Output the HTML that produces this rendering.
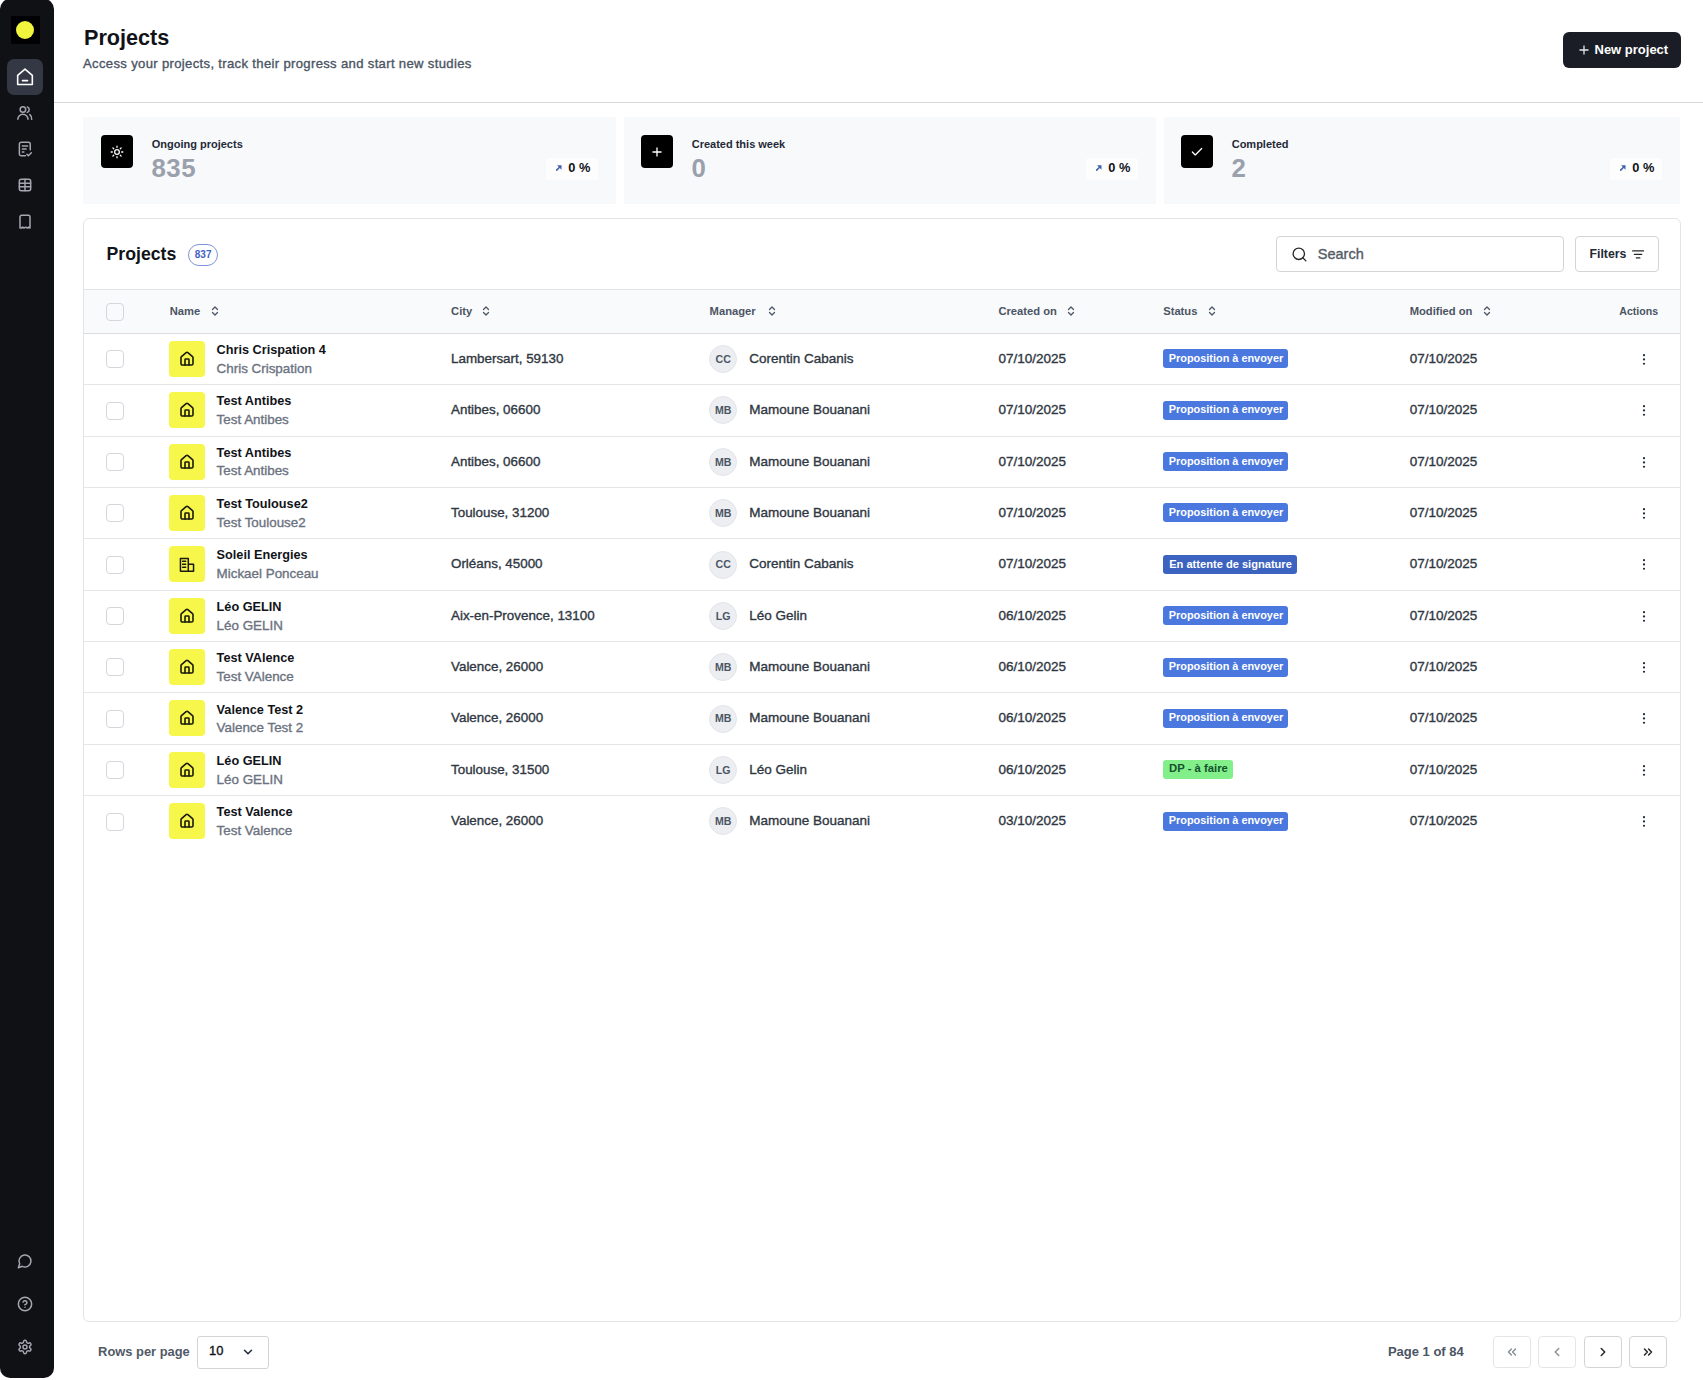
<!DOCTYPE html>
<html><head><meta charset="utf-8"><title>Projects</title><style>
*{margin:0;padding:0;box-sizing:border-box}
html,body{width:1703px;height:1380px;overflow:hidden;background:#fff;font-family:"Liberation Sans",sans-serif}
.t{position:absolute;white-space:nowrap}
.a{position:absolute}
svg{position:absolute;overflow:visible}
</style></head>
<body>
<div class="a" style="left:0;top:-1.5px;width:54px;height:1379.5px;background:#0f1115;border-radius:10px"></div>
<div class="a" style="left:11px;top:16px;width:29px;height:28px;background:#020205"></div>
<div class="a" style="left:16px;top:21px;width:18px;height:18px;border-radius:50%;background:#f1f53e"></div>
<div class="a" style="left:7px;top:59px;width:36px;height:36px;border-radius:7px;background:#343744"></div>
<svg style="left:15.0px;top:66.6px" width="20" height="20" viewBox="0 0 24 24" fill="none" stroke="#ffffff" stroke-width="1.92" stroke-linecap="round" stroke-linejoin="round"><path d="M3.2 10 12 2.6l8.8 7.4V21H3.2Z"/><path d="M9 16.4h6"/></svg>
<svg style="left:15.850000000000001px;top:103.65px" width="17.5" height="17.5" viewBox="0 0 24 24" fill="none" stroke="#a4a7b0" stroke-width="2.06" stroke-linecap="round" stroke-linejoin="round"><circle cx="9.5" cy="7.5" r="3.8"/><path d="M2.5 21a7 7 0 0 1 14 0"/><path d="M15.5 4a4 4 0 0 1 0 7.5"/><path d="M19 14.5a7 7 0 0 1 2.5 6.5"/></svg>
<svg style="left:16.0px;top:140.0px" width="18" height="18" viewBox="0 0 24 24" fill="none" stroke="#a4a7b0" stroke-width="2.00" stroke-linecap="round" stroke-linejoin="round"><path d="M12.5 21H7a2.5 2.5 0 0 1-2.5-2.5v-13A2.5 2.5 0 0 1 7 3h9.5A2.5 2.5 0 0 1 19 5.5V13"/><path d="M8.5 8h7M8.5 12h5M8.5 16h2"/><path d="m14.5 19 2 2 4-4"/></svg>
<svg style="left:17.0px;top:177.0px" width="16" height="16" viewBox="0 0 24 24" fill="none" stroke="#a4a7b0" stroke-width="2.25" stroke-linecap="round" stroke-linejoin="round"><rect x="3.5" y="3.5" width="17" height="17" rx="3"/><path d="M3.5 9.2h17M3.5 14.8h17M12 3.5v17"/></svg>
<svg style="left:17.0px;top:213.5px" width="16" height="16" viewBox="0 0 24 24" fill="none" stroke="#a4a7b0" stroke-width="2.25" stroke-linecap="round" stroke-linejoin="round"><path d="M4.5 4.5A2.5 2.5 0 0 1 7 2h10a2.5 2.5 0 0 1 2.5 2.5V21l-2-1.3-2 1.3-2.5-1.3-2.5 1.3-2-1.3-2 1.3L4.5 21Z"/></svg>
<svg style="left:17.0px;top:1253.0px" width="16" height="16" viewBox="0 0 24 24" fill="none" stroke="#a4a7b0" stroke-width="2.25" stroke-linecap="round" stroke-linejoin="round"><path d="M7.9 20A9 9 0 1 0 4 16.1L2 22Z"/></svg>
<svg style="left:17.0px;top:1296.0px" width="16" height="16" viewBox="0 0 24 24" fill="none" stroke="#a4a7b0" stroke-width="2.25" stroke-linecap="round" stroke-linejoin="round"><circle cx="12" cy="12" r="10"/><path d="M9.1 9a3 3 0 0 1 5.8 1c0 2-3 3-3 3"/><path d="M12 17h.01"/></svg>
<svg style="left:17.0px;top:1339.0px" width="16" height="16" viewBox="0 0 24 24" fill="none" stroke="#a4a7b0" stroke-width="2.25" stroke-linecap="round" stroke-linejoin="round"><path d="M12.22 2h-.44a2 2 0 0 0-2 2v.18a2 2 0 0 1-1 1.73l-.43.25a2 2 0 0 1-2 0l-.15-.08a2 2 0 0 0-2.73.73l-.22.38a2 2 0 0 0 .73 2.73l.15.1a2 2 0 0 1 1 1.72v.51a2 2 0 0 1-1 1.74l-.15.09a2 2 0 0 0-.73 2.73l.22.38a2 2 0 0 0 2.73.73l.15-.08a2 2 0 0 1 2 0l.43.25a2 2 0 0 1 1 1.73V20a2 2 0 0 0 2 2h.44a2 2 0 0 0 2-2v-.18a2 2 0 0 1 1-1.73l.43-.25a2 2 0 0 1 2 0l.15.08a2 2 0 0 0 2.73-.73l.22-.39a2 2 0 0 0-.73-2.73l-.15-.08a2 2 0 0 1-1-1.74v-.5a2 2 0 0 1 1-1.74l.15-.09a2 2 0 0 0 .73-2.73l-.22-.38a2 2 0 0 0-2.73-.73l-.15.08a2 2 0 0 1-2 0l-.43-.25a2 2 0 0 1-1-1.73V4a2 2 0 0 0-2-2z"/><circle cx="12" cy="12" r="3"/></svg>
<div class="t" style="left:84px;top:26.62px;font-size:21.6px;line-height:21.6px;font-weight:700;color:#111318;">Projects</div>
<div class="t" style="left:83px;top:56.71px;font-size:13.1px;line-height:13.1px;font-weight:400;color:#4b5563;letter-spacing:0.33px;-webkit-text-stroke:0.35px currentColor;">Access your projects, track their progress and start new studies</div>
<div class="a" style="left:54px;top:102px;width:1649px;height:1px;background:#d6d6da"></div>
<div class="a" style="left:1563px;top:32px;width:118px;height:36px;border-radius:6px;background:#1a1d26"></div>
<svg style="left:1578.5px;top:45px" width="10" height="10" viewBox="0 0 10 10" stroke="#e5e7eb" stroke-width="1.3" fill="none"><path d="M5 0.5v9M0.5 5h9"/></svg>
<div class="t" style="left:1594.5px;top:42.60px;font-size:13px;line-height:13px;font-weight:700;color:#ffffff;">New project</div>
<div class="a" style="left:83px;top:116.5px;width:533px;height:87px;background:#f8f9fb;border-radius:1px"></div>
<div class="a" style="left:101px;top:135px;width:32px;height:33px;border-radius:4px;background:#000"></div>
<svg style="left:110.0px;top:144.5px" width="14" height="14" viewBox="0 0 24 24" fill="none" stroke="#ffffff" stroke-width="2.23" stroke-linecap="round" stroke-linejoin="round"><circle cx="12" cy="12" r="4"/><path d="M12 2v2M12 20v2M4.93 4.93l1.41 1.41M17.66 17.66l1.41 1.41M2 12h2M20 12h2M6.34 17.66l-1.41 1.41M19.07 4.93l-1.41 1.41"/></svg>
<div class="t" style="left:151.7px;top:138.59px;font-size:11px;line-height:11px;font-weight:700;color:#1f2937;">Ongoing projects</div>
<div class="t" style="left:151.5px;top:155.56px;font-size:25.8px;line-height:25.8px;font-weight:700;color:#9aa1ad;letter-spacing:0.5px;">835</div>
<div class="a" style="left:546px;top:157.5px;width:52px;height:22px;border-radius:3px;background:#fdfdfe"></div>
<svg style="left:555.7px;top:165.2px" width="5.8" height="5.8" viewBox="0 0 6 6"><path d="M0.7 5.3 3.4 2.6" stroke="#3f5fae" stroke-width="1.6" stroke-linecap="round"/><path d="M1.1 0.3H5.7V4.9Z" fill="#3f5fae"/></svg>
<div class="t" style="right:1112.6px;top:161.76px;font-size:12.8px;line-height:12.8px;font-weight:700;color:#111318;">0 %</div>
<div class="a" style="left:624px;top:116.5px;width:532px;height:87px;background:#f8f9fb;border-radius:1px"></div>
<div class="a" style="left:641px;top:135px;width:32px;height:33px;border-radius:4px;background:#000"></div>
<svg style="left:650.0px;top:144.5px" width="14" height="14" viewBox="0 0 24 24" fill="none" stroke="#ffffff" stroke-width="2.23" stroke-linecap="round" stroke-linejoin="round"><path d="M5 12h14M12 5v14"/></svg>
<div class="t" style="left:691.7px;top:138.59px;font-size:11px;line-height:11px;font-weight:700;color:#1f2937;">Created this week</div>
<div class="t" style="left:691.5px;top:155.56px;font-size:25.8px;line-height:25.8px;font-weight:700;color:#9aa1ad;letter-spacing:0.5px;">0</div>
<div class="a" style="left:1086px;top:157.5px;width:52px;height:22px;border-radius:3px;background:#fdfdfe"></div>
<svg style="left:1095.7px;top:165.2px" width="5.8" height="5.8" viewBox="0 0 6 6"><path d="M0.7 5.3 3.4 2.6" stroke="#3f5fae" stroke-width="1.6" stroke-linecap="round"/><path d="M1.1 0.3H5.7V4.9Z" fill="#3f5fae"/></svg>
<div class="t" style="right:572.5999999999999px;top:161.76px;font-size:12.8px;line-height:12.8px;font-weight:700;color:#111318;">0 %</div>
<div class="a" style="left:1164px;top:116.5px;width:516px;height:87px;background:#f8f9fb;border-radius:1px"></div>
<div class="a" style="left:1181px;top:135px;width:32px;height:33px;border-radius:4px;background:#000"></div>
<svg style="left:1190.0px;top:144.5px" width="14" height="14" viewBox="0 0 24 24" fill="none" stroke="#ffffff" stroke-width="2.23" stroke-linecap="round" stroke-linejoin="round"><path d="M20 6 9 17l-5-5"/></svg>
<div class="t" style="left:1231.7px;top:138.59px;font-size:11px;line-height:11px;font-weight:700;color:#1f2937;">Completed</div>
<div class="t" style="left:1231.5px;top:155.56px;font-size:25.8px;line-height:25.8px;font-weight:700;color:#9aa1ad;letter-spacing:0.5px;">2</div>
<div class="a" style="left:1610px;top:157.5px;width:52px;height:22px;border-radius:3px;background:#fdfdfe"></div>
<svg style="left:1619.7px;top:165.2px" width="5.8" height="5.8" viewBox="0 0 6 6"><path d="M0.7 5.3 3.4 2.6" stroke="#3f5fae" stroke-width="1.6" stroke-linecap="round"/><path d="M1.1 0.3H5.7V4.9Z" fill="#3f5fae"/></svg>
<div class="t" style="right:48.59999999999991px;top:161.76px;font-size:12.8px;line-height:12.8px;font-weight:700;color:#111318;">0 %</div>
<div class="a" style="left:83px;top:218px;width:1598px;height:1104px;border:1px solid #e4e4e7;border-radius:6px;background:#fff"></div>
<div class="t" style="left:106.5px;top:245.82px;font-size:17.7px;line-height:17.7px;font-weight:700;color:#111318;">Projects</div>
<div class="a" style="left:188px;top:244px;width:30px;height:21.5px;border:1px solid #7f95d6;border-radius:11px"></div>
<div class="t" style="left:194.8px;top:250.14px;font-size:10px;line-height:10px;font-weight:700;color:#3f63c2;">837</div>
<div class="a" style="left:1276px;top:236px;width:288px;height:35.5px;border:1px solid #d4d4d8;border-radius:4px"></div>
<svg style="left:1291.1px;top:245.9px" width="17" height="17" viewBox="0 0 24 24" fill="none" stroke="#27272a" stroke-width="1.91" stroke-linecap="round" stroke-linejoin="round"><circle cx="11" cy="11" r="8"/><path d="m21 21-4.3-4.3"/></svg>
<div class="t" style="left:1317.8px;top:247.03px;font-size:14.5px;line-height:14.5px;font-weight:400;color:#555b66;-webkit-text-stroke:0.35px currentColor;">Search</div>
<div class="a" style="left:1575px;top:236px;width:84px;height:35.5px;border:1px solid #d4d4d8;border-radius:4px"></div>
<div class="t" style="left:1589.5px;top:247.59px;font-size:12.3px;line-height:12.3px;font-weight:700;color:#1f2937;">Filters</div>
<svg style="left:1632px;top:250px" width="12" height="9" viewBox="0 0 12 9" stroke="#27272a" stroke-width="1.15" fill="none" stroke-linecap="round"><path d="M0.6 0.9h11M2.4 4.4h7.4M4.3 7.9h3.6"/></svg>
<div class="a" style="left:84px;top:289px;width:1596px;height:45px;background:#f9fafb;border-top:1px solid #e4e4e7;border-bottom:1px solid #dcdce0"></div>
<div class="a" style="left:106px;top:303px;width:18px;height:18px;border:1px solid #d3d6db;border-radius:4px;background:transparent"></div>
<div class="t" style="left:169.7px;top:305.82px;font-size:11.2px;line-height:11.2px;font-weight:700;color:#4b5563;">Name</div>
<svg style="left:209.0px;top:305.2px" width="12" height="12" viewBox="0 0 24 24" fill="none" stroke="#4b5563" stroke-width="2.60" stroke-linecap="round" stroke-linejoin="round"><path d="m7 15 5 5 5-5"/><path d="m7 9 5-5 5 5"/></svg>
<div class="t" style="left:451.1px;top:305.82px;font-size:11.2px;line-height:11.2px;font-weight:700;color:#4b5563;">City</div>
<svg style="left:480.3px;top:305.2px" width="12" height="12" viewBox="0 0 24 24" fill="none" stroke="#4b5563" stroke-width="2.60" stroke-linecap="round" stroke-linejoin="round"><path d="m7 15 5 5 5-5"/><path d="m7 9 5-5 5 5"/></svg>
<div class="t" style="left:709.6px;top:305.82px;font-size:11.2px;line-height:11.2px;font-weight:700;color:#4b5563;">Manager</div>
<svg style="left:765.7px;top:305.2px" width="12" height="12" viewBox="0 0 24 24" fill="none" stroke="#4b5563" stroke-width="2.60" stroke-linecap="round" stroke-linejoin="round"><path d="m7 15 5 5 5-5"/><path d="m7 9 5-5 5 5"/></svg>
<div class="t" style="left:998.4px;top:305.82px;font-size:11.2px;line-height:11.2px;font-weight:700;color:#4b5563;">Created on</div>
<svg style="left:1065.0px;top:305.2px" width="12" height="12" viewBox="0 0 24 24" fill="none" stroke="#4b5563" stroke-width="2.60" stroke-linecap="round" stroke-linejoin="round"><path d="m7 15 5 5 5-5"/><path d="m7 9 5-5 5 5"/></svg>
<div class="t" style="left:1163.2px;top:305.82px;font-size:11.2px;line-height:11.2px;font-weight:700;color:#4b5563;">Status</div>
<svg style="left:1205.5px;top:305.2px" width="12" height="12" viewBox="0 0 24 24" fill="none" stroke="#4b5563" stroke-width="2.60" stroke-linecap="round" stroke-linejoin="round"><path d="m7 15 5 5 5-5"/><path d="m7 9 5-5 5 5"/></svg>
<div class="t" style="left:1409.7px;top:305.82px;font-size:11.2px;line-height:11.2px;font-weight:700;color:#4b5563;">Modified on</div>
<svg style="left:1480.8px;top:305.2px" width="12" height="12" viewBox="0 0 24 24" fill="none" stroke="#4b5563" stroke-width="2.60" stroke-linecap="round" stroke-linejoin="round"><path d="m7 15 5 5 5-5"/><path d="m7 9 5-5 5 5"/></svg>
<div class="t" style="right:44.90000000000009px;top:306.33px;font-size:10.6px;line-height:10.6px;font-weight:700;color:#4b5563;">Actions</div>
<div class="a" style="left:84px;top:384px;width:1596px;height:1px;background:#e6e6e9"></div>
<div class="a" style="left:106px;top:350px;width:18px;height:18px;border:1px solid #d3d6db;border-radius:4px;background:transparent"></div>
<div class="a" style="left:169px;top:340.90px;width:36px;height:36px;border-radius:4px;background:#f7f74b"></div>
<svg style="left:179.0px;top:350.9px" width="16" height="16" viewBox="0 0 24 24" fill="none" stroke="#1a1a10" stroke-width="2.40" stroke-linecap="round" stroke-linejoin="round"><path d="M15 21v-8a1 1 0 0 0-1-1h-4a1 1 0 0 0-1 1v8"/><path d="M3 10a2 2 0 0 1 .709-1.528l7-5.999a2 2 0 0 1 2.582 0l7 5.999A2 2 0 0 1 21 10v9a2 2 0 0 1-2 2H5a2 2 0 0 1-2-2z"/></svg>
<div class="t" style="left:216.6px;top:344.05px;font-size:12.7px;line-height:12.7px;font-weight:700;color:#111318;">Chris Crispation 4</div>
<div class="t" style="left:216.6px;top:361.76px;font-size:13.4px;line-height:13.4px;font-weight:400;color:#6b7280;-webkit-text-stroke:0.35px currentColor;">Chris Crispation</div>
<div class="t" style="left:451px;top:351.96px;font-size:13.4px;line-height:13.4px;font-weight:400;color:#2f3742;-webkit-text-stroke:0.35px currentColor;">Lambersart, 59130</div>
<div class="a" style="left:709px;top:345.10px;width:28px;height:28px;border-radius:50%;background:#eceef2;border:1px solid #e3e5ea"></div>
<div class="t" style="left:709.2px;top:353.93px;font-size:10.6px;line-height:10.6px;font-weight:700;color:#4b5563;width:28px;text-align:center">CC</div>
<div class="t" style="left:749.2px;top:351.87px;font-size:13.5px;line-height:13.5px;font-weight:400;color:#2f3742;-webkit-text-stroke:0.35px currentColor;">Corentin Cabanis</div>
<div class="t" style="left:998.4px;top:351.97px;font-size:13.5px;line-height:13.5px;font-weight:400;color:#2f3742;-webkit-text-stroke:0.35px currentColor;">07/10/2025</div>
<div class="a" style="left:1163px;top:349.40px;width:125px;height:19px;border-radius:3px;background:#4a78de"></div>
<div class="t" style="left:1168.8px;top:352.97px;font-size:10.9px;line-height:10.9px;font-weight:700;color:#ffffff;">Proposition à envoyer</div>
<div class="t" style="left:1409.7px;top:351.97px;font-size:13.5px;line-height:13.5px;font-weight:400;color:#2f3742;-webkit-text-stroke:0.35px currentColor;">07/10/2025</div>
<svg style="left:1640.2px;top:353.90px" width="8" height="11" viewBox="0 0 8 11" fill="#1f2937"><circle cx="4" cy="1.15" r="1.1"/><circle cx="4" cy="5.45" r="1.1"/><circle cx="4" cy="9.75" r="1.1"/></svg>
<div class="a" style="left:84px;top:436px;width:1596px;height:1px;background:#e6e6e9"></div>
<div class="a" style="left:106px;top:402px;width:18px;height:18px;border:1px solid #d3d6db;border-radius:4px;background:transparent"></div>
<div class="a" style="left:169px;top:392.25px;width:36px;height:36px;border-radius:4px;background:#f7f74b"></div>
<svg style="left:179.0px;top:402.25px" width="16" height="16" viewBox="0 0 24 24" fill="none" stroke="#1a1a10" stroke-width="2.40" stroke-linecap="round" stroke-linejoin="round"><path d="M15 21v-8a1 1 0 0 0-1-1h-4a1 1 0 0 0-1 1v8"/><path d="M3 10a2 2 0 0 1 .709-1.528l7-5.999a2 2 0 0 1 2.582 0l7 5.999A2 2 0 0 1 21 10v9a2 2 0 0 1-2 2H5a2 2 0 0 1-2-2z"/></svg>
<div class="t" style="left:216.6px;top:395.40px;font-size:12.7px;line-height:12.7px;font-weight:700;color:#111318;">Test Antibes</div>
<div class="t" style="left:216.6px;top:413.11px;font-size:13.4px;line-height:13.4px;font-weight:400;color:#6b7280;-webkit-text-stroke:0.35px currentColor;">Test Antibes</div>
<div class="t" style="left:451px;top:403.31px;font-size:13.4px;line-height:13.4px;font-weight:400;color:#2f3742;-webkit-text-stroke:0.35px currentColor;">Antibes, 06600</div>
<div class="a" style="left:709px;top:396.45px;width:28px;height:28px;border-radius:50%;background:#eceef2;border:1px solid #e3e5ea"></div>
<div class="t" style="left:709.2px;top:405.28px;font-size:10.6px;line-height:10.6px;font-weight:700;color:#4b5563;width:28px;text-align:center">MB</div>
<div class="t" style="left:749.2px;top:403.22px;font-size:13.5px;line-height:13.5px;font-weight:400;color:#2f3742;-webkit-text-stroke:0.35px currentColor;">Mamoune Bouanani</div>
<div class="t" style="left:998.4px;top:403.32px;font-size:13.5px;line-height:13.5px;font-weight:400;color:#2f3742;-webkit-text-stroke:0.35px currentColor;">07/10/2025</div>
<div class="a" style="left:1163px;top:400.75px;width:125px;height:19px;border-radius:3px;background:#4a78de"></div>
<div class="t" style="left:1168.8px;top:404.32px;font-size:10.9px;line-height:10.9px;font-weight:700;color:#ffffff;">Proposition à envoyer</div>
<div class="t" style="left:1409.7px;top:403.32px;font-size:13.5px;line-height:13.5px;font-weight:400;color:#2f3742;-webkit-text-stroke:0.35px currentColor;">07/10/2025</div>
<svg style="left:1640.2px;top:405.25px" width="8" height="11" viewBox="0 0 8 11" fill="#1f2937"><circle cx="4" cy="1.15" r="1.1"/><circle cx="4" cy="5.45" r="1.1"/><circle cx="4" cy="9.75" r="1.1"/></svg>
<div class="a" style="left:84px;top:487px;width:1596px;height:1px;background:#e6e6e9"></div>
<div class="a" style="left:106px;top:453px;width:18px;height:18px;border:1px solid #d3d6db;border-radius:4px;background:transparent"></div>
<div class="a" style="left:169px;top:443.60px;width:36px;height:36px;border-radius:4px;background:#f7f74b"></div>
<svg style="left:179.0px;top:453.59999999999997px" width="16" height="16" viewBox="0 0 24 24" fill="none" stroke="#1a1a10" stroke-width="2.40" stroke-linecap="round" stroke-linejoin="round"><path d="M15 21v-8a1 1 0 0 0-1-1h-4a1 1 0 0 0-1 1v8"/><path d="M3 10a2 2 0 0 1 .709-1.528l7-5.999a2 2 0 0 1 2.582 0l7 5.999A2 2 0 0 1 21 10v9a2 2 0 0 1-2 2H5a2 2 0 0 1-2-2z"/></svg>
<div class="t" style="left:216.6px;top:446.75px;font-size:12.7px;line-height:12.7px;font-weight:700;color:#111318;">Test Antibes</div>
<div class="t" style="left:216.6px;top:464.46px;font-size:13.4px;line-height:13.4px;font-weight:400;color:#6b7280;-webkit-text-stroke:0.35px currentColor;">Test Antibes</div>
<div class="t" style="left:451px;top:454.66px;font-size:13.4px;line-height:13.4px;font-weight:400;color:#2f3742;-webkit-text-stroke:0.35px currentColor;">Antibes, 06600</div>
<div class="a" style="left:709px;top:447.80px;width:28px;height:28px;border-radius:50%;background:#eceef2;border:1px solid #e3e5ea"></div>
<div class="t" style="left:709.2px;top:456.63px;font-size:10.6px;line-height:10.6px;font-weight:700;color:#4b5563;width:28px;text-align:center">MB</div>
<div class="t" style="left:749.2px;top:454.57px;font-size:13.5px;line-height:13.5px;font-weight:400;color:#2f3742;-webkit-text-stroke:0.35px currentColor;">Mamoune Bouanani</div>
<div class="t" style="left:998.4px;top:454.67px;font-size:13.5px;line-height:13.5px;font-weight:400;color:#2f3742;-webkit-text-stroke:0.35px currentColor;">07/10/2025</div>
<div class="a" style="left:1163px;top:452.10px;width:125px;height:19px;border-radius:3px;background:#4a78de"></div>
<div class="t" style="left:1168.8px;top:455.67px;font-size:10.9px;line-height:10.9px;font-weight:700;color:#ffffff;">Proposition à envoyer</div>
<div class="t" style="left:1409.7px;top:454.67px;font-size:13.5px;line-height:13.5px;font-weight:400;color:#2f3742;-webkit-text-stroke:0.35px currentColor;">07/10/2025</div>
<svg style="left:1640.2px;top:456.60px" width="8" height="11" viewBox="0 0 8 11" fill="#1f2937"><circle cx="4" cy="1.15" r="1.1"/><circle cx="4" cy="5.45" r="1.1"/><circle cx="4" cy="9.75" r="1.1"/></svg>
<div class="a" style="left:84px;top:538px;width:1596px;height:1px;background:#e6e6e9"></div>
<div class="a" style="left:106px;top:504px;width:18px;height:18px;border:1px solid #d3d6db;border-radius:4px;background:transparent"></div>
<div class="a" style="left:169px;top:494.95px;width:36px;height:36px;border-radius:4px;background:#f7f74b"></div>
<svg style="left:179.0px;top:504.95000000000005px" width="16" height="16" viewBox="0 0 24 24" fill="none" stroke="#1a1a10" stroke-width="2.40" stroke-linecap="round" stroke-linejoin="round"><path d="M15 21v-8a1 1 0 0 0-1-1h-4a1 1 0 0 0-1 1v8"/><path d="M3 10a2 2 0 0 1 .709-1.528l7-5.999a2 2 0 0 1 2.582 0l7 5.999A2 2 0 0 1 21 10v9a2 2 0 0 1-2 2H5a2 2 0 0 1-2-2z"/></svg>
<div class="t" style="left:216.6px;top:498.10px;font-size:12.7px;line-height:12.7px;font-weight:700;color:#111318;">Test Toulouse2</div>
<div class="t" style="left:216.6px;top:515.81px;font-size:13.4px;line-height:13.4px;font-weight:400;color:#6b7280;-webkit-text-stroke:0.35px currentColor;">Test Toulouse2</div>
<div class="t" style="left:451px;top:506.01px;font-size:13.4px;line-height:13.4px;font-weight:400;color:#2f3742;-webkit-text-stroke:0.35px currentColor;">Toulouse, 31200</div>
<div class="a" style="left:709px;top:499.15px;width:28px;height:28px;border-radius:50%;background:#eceef2;border:1px solid #e3e5ea"></div>
<div class="t" style="left:709.2px;top:507.98px;font-size:10.6px;line-height:10.6px;font-weight:700;color:#4b5563;width:28px;text-align:center">MB</div>
<div class="t" style="left:749.2px;top:505.92px;font-size:13.5px;line-height:13.5px;font-weight:400;color:#2f3742;-webkit-text-stroke:0.35px currentColor;">Mamoune Bouanani</div>
<div class="t" style="left:998.4px;top:506.02px;font-size:13.5px;line-height:13.5px;font-weight:400;color:#2f3742;-webkit-text-stroke:0.35px currentColor;">07/10/2025</div>
<div class="a" style="left:1163px;top:503.45px;width:125px;height:19px;border-radius:3px;background:#4a78de"></div>
<div class="t" style="left:1168.8px;top:507.02px;font-size:10.9px;line-height:10.9px;font-weight:700;color:#ffffff;">Proposition à envoyer</div>
<div class="t" style="left:1409.7px;top:506.02px;font-size:13.5px;line-height:13.5px;font-weight:400;color:#2f3742;-webkit-text-stroke:0.35px currentColor;">07/10/2025</div>
<svg style="left:1640.2px;top:507.95px" width="8" height="11" viewBox="0 0 8 11" fill="#1f2937"><circle cx="4" cy="1.15" r="1.1"/><circle cx="4" cy="5.45" r="1.1"/><circle cx="4" cy="9.75" r="1.1"/></svg>
<div class="a" style="left:84px;top:590px;width:1596px;height:1px;background:#e6e6e9"></div>
<div class="a" style="left:106px;top:556px;width:18px;height:18px;border:1px solid #d3d6db;border-radius:4px;background:transparent"></div>
<div class="a" style="left:169px;top:546.30px;width:36px;height:36px;border-radius:4px;background:#f7f74b"></div>
<svg style="left:179px;top:557.00px" width="16" height="16" viewBox="0 0 16 16" fill="none" stroke="#1a1a10" stroke-width="1.5" stroke-linejoin="round" stroke-linecap="round"><path d="M1.45 14.15V1.45H9.3V14.15ZM9.3 7.35H14.55V14.15H9.3"/><path d="M3.6 4.2H6.7M3.6 7.2H6.7M3.6 10.3H6.7"/></svg>
<div class="t" style="left:216.6px;top:549.45px;font-size:12.7px;line-height:12.7px;font-weight:700;color:#111318;">Soleil Energies</div>
<div class="t" style="left:216.6px;top:567.16px;font-size:13.4px;line-height:13.4px;font-weight:400;color:#6b7280;-webkit-text-stroke:0.35px currentColor;">Mickael Ponceau</div>
<div class="t" style="left:451px;top:557.36px;font-size:13.4px;line-height:13.4px;font-weight:400;color:#2f3742;-webkit-text-stroke:0.35px currentColor;">Orléans, 45000</div>
<div class="a" style="left:709px;top:550.50px;width:28px;height:28px;border-radius:50%;background:#eceef2;border:1px solid #e3e5ea"></div>
<div class="t" style="left:709.2px;top:559.33px;font-size:10.6px;line-height:10.6px;font-weight:700;color:#4b5563;width:28px;text-align:center">CC</div>
<div class="t" style="left:749.2px;top:557.27px;font-size:13.5px;line-height:13.5px;font-weight:400;color:#2f3742;-webkit-text-stroke:0.35px currentColor;">Corentin Cabanis</div>
<div class="t" style="left:998.4px;top:557.37px;font-size:13.5px;line-height:13.5px;font-weight:400;color:#2f3742;-webkit-text-stroke:0.35px currentColor;">07/10/2025</div>
<div class="a" style="left:1163px;top:555.20px;width:134px;height:18.6px;border-radius:3px;background:#3c63bf"></div>
<div class="t" style="left:1169.2px;top:558.60px;font-size:11.1px;line-height:11.1px;font-weight:700;color:#ffffff;">En attente de signature</div>
<div class="t" style="left:1409.7px;top:557.37px;font-size:13.5px;line-height:13.5px;font-weight:400;color:#2f3742;-webkit-text-stroke:0.35px currentColor;">07/10/2025</div>
<svg style="left:1640.2px;top:559.30px" width="8" height="11" viewBox="0 0 8 11" fill="#1f2937"><circle cx="4" cy="1.15" r="1.1"/><circle cx="4" cy="5.45" r="1.1"/><circle cx="4" cy="9.75" r="1.1"/></svg>
<div class="a" style="left:84px;top:641px;width:1596px;height:1px;background:#e6e6e9"></div>
<div class="a" style="left:106px;top:607px;width:18px;height:18px;border:1px solid #d3d6db;border-radius:4px;background:transparent"></div>
<div class="a" style="left:169px;top:597.65px;width:36px;height:36px;border-radius:4px;background:#f7f74b"></div>
<svg style="left:179.0px;top:607.65px" width="16" height="16" viewBox="0 0 24 24" fill="none" stroke="#1a1a10" stroke-width="2.40" stroke-linecap="round" stroke-linejoin="round"><path d="M15 21v-8a1 1 0 0 0-1-1h-4a1 1 0 0 0-1 1v8"/><path d="M3 10a2 2 0 0 1 .709-1.528l7-5.999a2 2 0 0 1 2.582 0l7 5.999A2 2 0 0 1 21 10v9a2 2 0 0 1-2 2H5a2 2 0 0 1-2-2z"/></svg>
<div class="t" style="left:216.6px;top:600.80px;font-size:12.7px;line-height:12.7px;font-weight:700;color:#111318;">Léo GELIN</div>
<div class="t" style="left:216.6px;top:618.51px;font-size:13.4px;line-height:13.4px;font-weight:400;color:#6b7280;-webkit-text-stroke:0.35px currentColor;">Léo GELIN</div>
<div class="t" style="left:451px;top:608.71px;font-size:13.4px;line-height:13.4px;font-weight:400;color:#2f3742;-webkit-text-stroke:0.35px currentColor;">Aix-en-Provence, 13100</div>
<div class="a" style="left:709px;top:601.85px;width:28px;height:28px;border-radius:50%;background:#eceef2;border:1px solid #e3e5ea"></div>
<div class="t" style="left:709.2px;top:610.68px;font-size:10.6px;line-height:10.6px;font-weight:700;color:#4b5563;width:28px;text-align:center">LG</div>
<div class="t" style="left:749.2px;top:608.62px;font-size:13.5px;line-height:13.5px;font-weight:400;color:#2f3742;-webkit-text-stroke:0.35px currentColor;">Léo Gelin</div>
<div class="t" style="left:998.4px;top:608.72px;font-size:13.5px;line-height:13.5px;font-weight:400;color:#2f3742;-webkit-text-stroke:0.35px currentColor;">06/10/2025</div>
<div class="a" style="left:1163px;top:606.15px;width:125px;height:19px;border-radius:3px;background:#4a78de"></div>
<div class="t" style="left:1168.8px;top:609.72px;font-size:10.9px;line-height:10.9px;font-weight:700;color:#ffffff;">Proposition à envoyer</div>
<div class="t" style="left:1409.7px;top:608.72px;font-size:13.5px;line-height:13.5px;font-weight:400;color:#2f3742;-webkit-text-stroke:0.35px currentColor;">07/10/2025</div>
<svg style="left:1640.2px;top:610.65px" width="8" height="11" viewBox="0 0 8 11" fill="#1f2937"><circle cx="4" cy="1.15" r="1.1"/><circle cx="4" cy="5.45" r="1.1"/><circle cx="4" cy="9.75" r="1.1"/></svg>
<div class="a" style="left:84px;top:692px;width:1596px;height:1px;background:#e6e6e9"></div>
<div class="a" style="left:106px;top:658px;width:18px;height:18px;border:1px solid #d3d6db;border-radius:4px;background:transparent"></div>
<div class="a" style="left:169px;top:649.00px;width:36px;height:36px;border-radius:4px;background:#f7f74b"></div>
<svg style="left:179.0px;top:659.0px" width="16" height="16" viewBox="0 0 24 24" fill="none" stroke="#1a1a10" stroke-width="2.40" stroke-linecap="round" stroke-linejoin="round"><path d="M15 21v-8a1 1 0 0 0-1-1h-4a1 1 0 0 0-1 1v8"/><path d="M3 10a2 2 0 0 1 .709-1.528l7-5.999a2 2 0 0 1 2.582 0l7 5.999A2 2 0 0 1 21 10v9a2 2 0 0 1-2 2H5a2 2 0 0 1-2-2z"/></svg>
<div class="t" style="left:216.6px;top:652.15px;font-size:12.7px;line-height:12.7px;font-weight:700;color:#111318;">Test VAlence</div>
<div class="t" style="left:216.6px;top:669.86px;font-size:13.4px;line-height:13.4px;font-weight:400;color:#6b7280;-webkit-text-stroke:0.35px currentColor;">Test VAlence</div>
<div class="t" style="left:451px;top:660.06px;font-size:13.4px;line-height:13.4px;font-weight:400;color:#2f3742;-webkit-text-stroke:0.35px currentColor;">Valence, 26000</div>
<div class="a" style="left:709px;top:653.20px;width:28px;height:28px;border-radius:50%;background:#eceef2;border:1px solid #e3e5ea"></div>
<div class="t" style="left:709.2px;top:662.03px;font-size:10.6px;line-height:10.6px;font-weight:700;color:#4b5563;width:28px;text-align:center">MB</div>
<div class="t" style="left:749.2px;top:659.97px;font-size:13.5px;line-height:13.5px;font-weight:400;color:#2f3742;-webkit-text-stroke:0.35px currentColor;">Mamoune Bouanani</div>
<div class="t" style="left:998.4px;top:660.07px;font-size:13.5px;line-height:13.5px;font-weight:400;color:#2f3742;-webkit-text-stroke:0.35px currentColor;">06/10/2025</div>
<div class="a" style="left:1163px;top:657.50px;width:125px;height:19px;border-radius:3px;background:#4a78de"></div>
<div class="t" style="left:1168.8px;top:661.07px;font-size:10.9px;line-height:10.9px;font-weight:700;color:#ffffff;">Proposition à envoyer</div>
<div class="t" style="left:1409.7px;top:660.07px;font-size:13.5px;line-height:13.5px;font-weight:400;color:#2f3742;-webkit-text-stroke:0.35px currentColor;">07/10/2025</div>
<svg style="left:1640.2px;top:662.00px" width="8" height="11" viewBox="0 0 8 11" fill="#1f2937"><circle cx="4" cy="1.15" r="1.1"/><circle cx="4" cy="5.45" r="1.1"/><circle cx="4" cy="9.75" r="1.1"/></svg>
<div class="a" style="left:84px;top:744px;width:1596px;height:1px;background:#e6e6e9"></div>
<div class="a" style="left:106px;top:710px;width:18px;height:18px;border:1px solid #d3d6db;border-radius:4px;background:transparent"></div>
<div class="a" style="left:169px;top:700.35px;width:36px;height:36px;border-radius:4px;background:#f7f74b"></div>
<svg style="left:179.0px;top:710.3499999999999px" width="16" height="16" viewBox="0 0 24 24" fill="none" stroke="#1a1a10" stroke-width="2.40" stroke-linecap="round" stroke-linejoin="round"><path d="M15 21v-8a1 1 0 0 0-1-1h-4a1 1 0 0 0-1 1v8"/><path d="M3 10a2 2 0 0 1 .709-1.528l7-5.999a2 2 0 0 1 2.582 0l7 5.999A2 2 0 0 1 21 10v9a2 2 0 0 1-2 2H5a2 2 0 0 1-2-2z"/></svg>
<div class="t" style="left:216.6px;top:703.50px;font-size:12.7px;line-height:12.7px;font-weight:700;color:#111318;">Valence Test 2</div>
<div class="t" style="left:216.6px;top:721.21px;font-size:13.4px;line-height:13.4px;font-weight:400;color:#6b7280;-webkit-text-stroke:0.35px currentColor;">Valence Test 2</div>
<div class="t" style="left:451px;top:711.41px;font-size:13.4px;line-height:13.4px;font-weight:400;color:#2f3742;-webkit-text-stroke:0.35px currentColor;">Valence, 26000</div>
<div class="a" style="left:709px;top:704.55px;width:28px;height:28px;border-radius:50%;background:#eceef2;border:1px solid #e3e5ea"></div>
<div class="t" style="left:709.2px;top:713.38px;font-size:10.6px;line-height:10.6px;font-weight:700;color:#4b5563;width:28px;text-align:center">MB</div>
<div class="t" style="left:749.2px;top:711.32px;font-size:13.5px;line-height:13.5px;font-weight:400;color:#2f3742;-webkit-text-stroke:0.35px currentColor;">Mamoune Bouanani</div>
<div class="t" style="left:998.4px;top:711.42px;font-size:13.5px;line-height:13.5px;font-weight:400;color:#2f3742;-webkit-text-stroke:0.35px currentColor;">06/10/2025</div>
<div class="a" style="left:1163px;top:708.85px;width:125px;height:19px;border-radius:3px;background:#4a78de"></div>
<div class="t" style="left:1168.8px;top:712.42px;font-size:10.9px;line-height:10.9px;font-weight:700;color:#ffffff;">Proposition à envoyer</div>
<div class="t" style="left:1409.7px;top:711.42px;font-size:13.5px;line-height:13.5px;font-weight:400;color:#2f3742;-webkit-text-stroke:0.35px currentColor;">07/10/2025</div>
<svg style="left:1640.2px;top:713.35px" width="8" height="11" viewBox="0 0 8 11" fill="#1f2937"><circle cx="4" cy="1.15" r="1.1"/><circle cx="4" cy="5.45" r="1.1"/><circle cx="4" cy="9.75" r="1.1"/></svg>
<div class="a" style="left:84px;top:795px;width:1596px;height:1px;background:#e6e6e9"></div>
<div class="a" style="left:106px;top:761px;width:18px;height:18px;border:1px solid #d3d6db;border-radius:4px;background:transparent"></div>
<div class="a" style="left:169px;top:751.70px;width:36px;height:36px;border-radius:4px;background:#f7f74b"></div>
<svg style="left:179.0px;top:761.7px" width="16" height="16" viewBox="0 0 24 24" fill="none" stroke="#1a1a10" stroke-width="2.40" stroke-linecap="round" stroke-linejoin="round"><path d="M15 21v-8a1 1 0 0 0-1-1h-4a1 1 0 0 0-1 1v8"/><path d="M3 10a2 2 0 0 1 .709-1.528l7-5.999a2 2 0 0 1 2.582 0l7 5.999A2 2 0 0 1 21 10v9a2 2 0 0 1-2 2H5a2 2 0 0 1-2-2z"/></svg>
<div class="t" style="left:216.6px;top:754.85px;font-size:12.7px;line-height:12.7px;font-weight:700;color:#111318;">Léo GELIN</div>
<div class="t" style="left:216.6px;top:772.56px;font-size:13.4px;line-height:13.4px;font-weight:400;color:#6b7280;-webkit-text-stroke:0.35px currentColor;">Léo GELIN</div>
<div class="t" style="left:451px;top:762.76px;font-size:13.4px;line-height:13.4px;font-weight:400;color:#2f3742;-webkit-text-stroke:0.35px currentColor;">Toulouse, 31500</div>
<div class="a" style="left:709px;top:755.90px;width:28px;height:28px;border-radius:50%;background:#eceef2;border:1px solid #e3e5ea"></div>
<div class="t" style="left:709.2px;top:764.73px;font-size:10.6px;line-height:10.6px;font-weight:700;color:#4b5563;width:28px;text-align:center">LG</div>
<div class="t" style="left:749.2px;top:762.67px;font-size:13.5px;line-height:13.5px;font-weight:400;color:#2f3742;-webkit-text-stroke:0.35px currentColor;">Léo Gelin</div>
<div class="t" style="left:998.4px;top:762.77px;font-size:13.5px;line-height:13.5px;font-weight:400;color:#2f3742;-webkit-text-stroke:0.35px currentColor;">06/10/2025</div>
<div class="a" style="left:1163px;top:760.20px;width:70px;height:19px;border-radius:3px;background:#82ef8a"></div>
<div class="t" style="left:1169px;top:763.43px;font-size:11.3px;line-height:11.3px;font-weight:700;color:#14532d;">DP - à faire</div>
<div class="t" style="left:1409.7px;top:762.77px;font-size:13.5px;line-height:13.5px;font-weight:400;color:#2f3742;-webkit-text-stroke:0.35px currentColor;">07/10/2025</div>
<svg style="left:1640.2px;top:764.70px" width="8" height="11" viewBox="0 0 8 11" fill="#1f2937"><circle cx="4" cy="1.15" r="1.1"/><circle cx="4" cy="5.45" r="1.1"/><circle cx="4" cy="9.75" r="1.1"/></svg>
<div class="a" style="left:106px;top:813px;width:18px;height:18px;border:1px solid #d3d6db;border-radius:4px;background:transparent"></div>
<div class="a" style="left:169px;top:803.05px;width:36px;height:36px;border-radius:4px;background:#f7f74b"></div>
<svg style="left:179.0px;top:813.05px" width="16" height="16" viewBox="0 0 24 24" fill="none" stroke="#1a1a10" stroke-width="2.40" stroke-linecap="round" stroke-linejoin="round"><path d="M15 21v-8a1 1 0 0 0-1-1h-4a1 1 0 0 0-1 1v8"/><path d="M3 10a2 2 0 0 1 .709-1.528l7-5.999a2 2 0 0 1 2.582 0l7 5.999A2 2 0 0 1 21 10v9a2 2 0 0 1-2 2H5a2 2 0 0 1-2-2z"/></svg>
<div class="t" style="left:216.6px;top:806.20px;font-size:12.7px;line-height:12.7px;font-weight:700;color:#111318;">Test Valence</div>
<div class="t" style="left:216.6px;top:823.91px;font-size:13.4px;line-height:13.4px;font-weight:400;color:#6b7280;-webkit-text-stroke:0.35px currentColor;">Test Valence</div>
<div class="t" style="left:451px;top:814.11px;font-size:13.4px;line-height:13.4px;font-weight:400;color:#2f3742;-webkit-text-stroke:0.35px currentColor;">Valence, 26000</div>
<div class="a" style="left:709px;top:807.25px;width:28px;height:28px;border-radius:50%;background:#eceef2;border:1px solid #e3e5ea"></div>
<div class="t" style="left:709.2px;top:816.08px;font-size:10.6px;line-height:10.6px;font-weight:700;color:#4b5563;width:28px;text-align:center">MB</div>
<div class="t" style="left:749.2px;top:814.02px;font-size:13.5px;line-height:13.5px;font-weight:400;color:#2f3742;-webkit-text-stroke:0.35px currentColor;">Mamoune Bouanani</div>
<div class="t" style="left:998.4px;top:814.12px;font-size:13.5px;line-height:13.5px;font-weight:400;color:#2f3742;-webkit-text-stroke:0.35px currentColor;">03/10/2025</div>
<div class="a" style="left:1163px;top:811.55px;width:125px;height:19px;border-radius:3px;background:#4a78de"></div>
<div class="t" style="left:1168.8px;top:815.12px;font-size:10.9px;line-height:10.9px;font-weight:700;color:#ffffff;">Proposition à envoyer</div>
<div class="t" style="left:1409.7px;top:814.12px;font-size:13.5px;line-height:13.5px;font-weight:400;color:#2f3742;-webkit-text-stroke:0.35px currentColor;">07/10/2025</div>
<svg style="left:1640.2px;top:816.05px" width="8" height="11" viewBox="0 0 8 11" fill="#1f2937"><circle cx="4" cy="1.15" r="1.1"/><circle cx="4" cy="5.45" r="1.1"/><circle cx="4" cy="9.75" r="1.1"/></svg>
<div class="t" style="left:98.1px;top:1345.68px;font-size:12.9px;line-height:12.9px;font-weight:700;color:#515a67;">Rows per page</div>
<div class="a" style="left:197px;top:1336px;width:71.5px;height:32.5px;border:1px solid #d4d4d8;border-radius:3px"></div>
<div class="t" style="left:209px;top:1344.88px;font-size:12.9px;line-height:12.9px;font-weight:400;color:#111318;-webkit-text-stroke:0.35px currentColor;">10</div>
<svg style="left:241.0px;top:1345.0px" width="14" height="14" viewBox="0 0 24 24" fill="none" stroke="#1f2937" stroke-width="2.57" stroke-linecap="round" stroke-linejoin="round"><path d="m6 9 6 6 6-6"/></svg>
<div class="t" style="left:1387.9px;top:1345.20px;font-size:13px;line-height:13px;font-weight:700;color:#4b5563;">Page 1 of 84</div>
<div class="a" style="left:1493.3px;top:1336px;width:37.5px;height:32.3px;border:1px solid #e6e6e9;border-radius:4px"></div>
<svg style="left:1505.05px;top:1345.0px" width="14" height="14" viewBox="0 0 24 24" fill="none" stroke="#8a8f98" stroke-width="2.57" stroke-linecap="round" stroke-linejoin="round"><path d="m11 17-5-5 5-5"/><path d="m18 17-5-5 5-5"/></svg>
<div class="a" style="left:1538px;top:1336px;width:37.5px;height:32.3px;border:1px solid #e6e6e9;border-radius:4px"></div>
<svg style="left:1549.75px;top:1345.0px" width="14" height="14" viewBox="0 0 24 24" fill="none" stroke="#8a8f98" stroke-width="2.57" stroke-linecap="round" stroke-linejoin="round"><path d="m15 18-6-6 6-6"/></svg>
<div class="a" style="left:1584px;top:1336px;width:37.5px;height:32.3px;border:1px solid #d4d4d8;border-radius:4px"></div>
<svg style="left:1595.75px;top:1345.0px" width="14" height="14" viewBox="0 0 24 24" fill="none" stroke="#27272a" stroke-width="2.57" stroke-linecap="round" stroke-linejoin="round"><path d="m9 18 6-6-6-6"/></svg>
<div class="a" style="left:1629.3px;top:1336px;width:37.5px;height:32.3px;border:1px solid #d4d4d8;border-radius:4px"></div>
<svg style="left:1641.05px;top:1345.0px" width="14" height="14" viewBox="0 0 24 24" fill="none" stroke="#27272a" stroke-width="2.57" stroke-linecap="round" stroke-linejoin="round"><path d="m6 17 5-5-5-5"/><path d="m13 17 5-5-5-5"/></svg>
</body></html>
